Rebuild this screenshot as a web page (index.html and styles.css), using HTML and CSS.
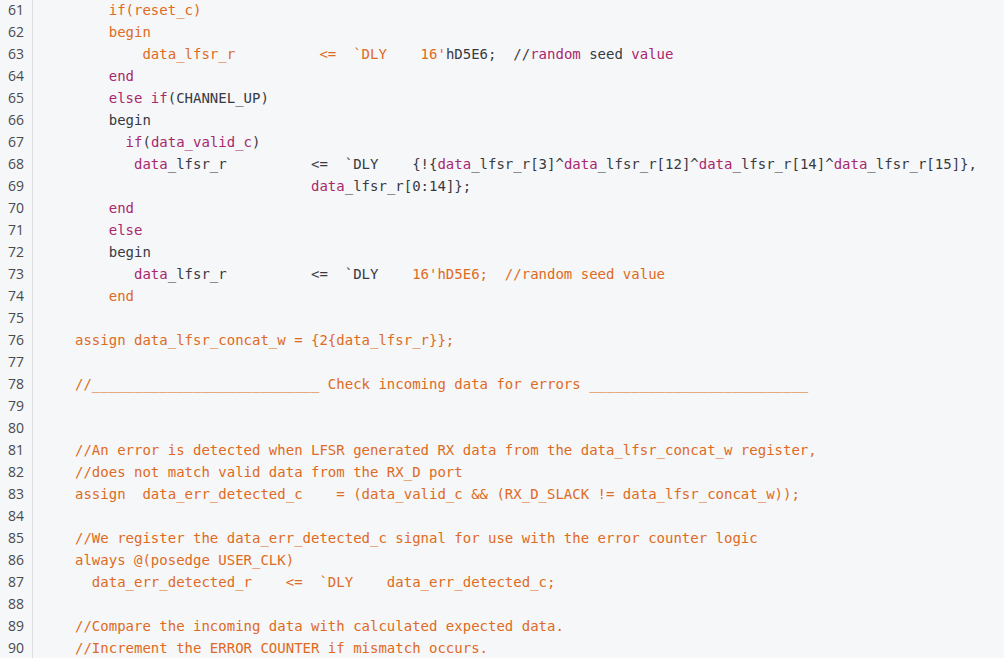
FILE: index.html
```html
<!DOCTYPE html>
<html>
<head>
<meta charset="utf-8">
<link rel="stylesheet" href="styles.css">
</head>
<body>
<div class="code">
  <div class="gutter">
    <div class="ln">61</div><div class="ln">62</div><div class="ln">63</div><div class="ln">64</div><div class="ln">65</div>
    <div class="ln">66</div><div class="ln">67</div><div class="ln">68</div><div class="ln">69</div><div class="ln">70</div>
    <div class="ln">71</div><div class="ln">72</div><div class="ln">73</div><div class="ln">74</div><div class="ln">75</div>
    <div class="ln">76</div><div class="ln">77</div><div class="ln">78</div><div class="ln">79</div><div class="ln">80</div>
    <div class="ln">81</div><div class="ln">82</div><div class="ln">83</div><div class="ln">84</div><div class="ln">85</div>
    <div class="ln">86</div><div class="ln">87</div><div class="ln">88</div><div class="ln">89</div><div class="ln">90</div>
  </div>
  <div class="lines">
<div class="line"><span class="o">    if(reset_c)</span></div>
<div class="line"><span class="o">    begin</span></div>
<div class="line"><span class="o">        data_lfsr_r          &lt;=  `DLY    16'</span><span class="d">hD5E6;  //</span><span class="p">random</span><span class="d"> seed </span><span class="p">value</span></div>
<div class="line"><span class="p">    end</span></div>
<div class="line"><span class="p">    else if</span><span class="d">(CHANNEL_UP)</span></div>
<div class="line"><span class="d">    begin</span></div>
<div class="line"><span class="p">      if</span><span class="d">(</span><span class="p">data_valid_c</span><span class="d">)</span></div>
<div class="line"><span class="p">       data</span><span class="d">_lfsr_r          &lt;=  `DLY    {!{</span><span class="p">data</span><span class="d">_lfsr_r[3]^</span><span class="p">data</span><span class="d">_lfsr_r[12]^</span><span class="p">data</span><span class="d">_lfsr_r[14]^</span><span class="p">data</span><span class="d">_lfsr_r[15]},</span></div>
<div class="line"><span class="d">                            </span><span class="p">data</span><span class="d">_lfsr_r[0:14]};</span></div>
<div class="line"><span class="p">    end</span></div>
<div class="line"><span class="p">    else</span></div>
<div class="line"><span class="d">    begin</span></div>
<div class="line"><span class="p">       data</span><span class="d">_lfsr_r          &lt;=  `DLY    </span><span class="o">16'hD5E6;  //random seed value</span></div>
<div class="line"><span class="o">    end</span></div>
<div class="line"> </div>
<div class="line"><span class="o">assign data_lfsr_concat_w = {2{data_lfsr_r}};</span></div>
<div class="line"> </div>
<div class="line"><span class="o">//___________________________ Check incoming data for errors __________________________</span></div>
<div class="line"> </div>
<div class="line"> </div>
<div class="line"><span class="o">//An error is detected when LFSR generated RX data from the data_lfsr_concat_w register,</span></div>
<div class="line"><span class="o">//does not match valid data from the RX_D port</span></div>
<div class="line"><span class="o">assign  data_err_detected_c    = (data_valid_c &amp;&amp; (RX_D_SLACK != data_lfsr_concat_w));</span></div>
<div class="line"> </div>
<div class="line"><span class="o">//We register the data_err_detected_c signal for use with the error counter logic</span></div>
<div class="line"><span class="o">always @(posedge USER_CLK)</span></div>
<div class="line"><span class="o">  data_err_detected_r    &lt;=  `DLY    data_err_detected_c;</span></div>
<div class="line"> </div>
<div class="line"><span class="o">//Compare the incoming data with calculated expected data.</span></div>
<div class="line"><span class="o">//Increment the ERROR COUNTER if mismatch occurs.</span></div>
  </div>
</div>
</body>
</html>
```

FILE: styles.css
```css
html, body {
  margin: 0;
  padding: 0;
  background: #f6f7f9;
}
body {
  width: 1004px;
  height: 658px;
  overflow: hidden;
}
.code {
  display: flex;
  margin-top: -1px;
}
.gutter {
  width: 33px;
  flex: none;
  border-right: 1px solid #dcdee2;
  box-sizing: border-box;
}
.ln {
  height: 22px;
  line-height: 22px;
  font-family: "Open Sans", "Noto Sans", sans-serif;
  font-size: 14px;
  color: #4a4a4a;
  text-align: right;
  padding-right: 8px;
}
.lines {
  padding-left: 42px;
  font-family: "DejaVu Sans Mono", monospace;
  font-size: 14px;
}
.line {
  height: 22px;
  line-height: 22px;
  white-space: pre;
  color: #383a42;
}
.o { color: #de6b23; }
.p { color: #a8286e; }
.d { color: #383a42; }
```
